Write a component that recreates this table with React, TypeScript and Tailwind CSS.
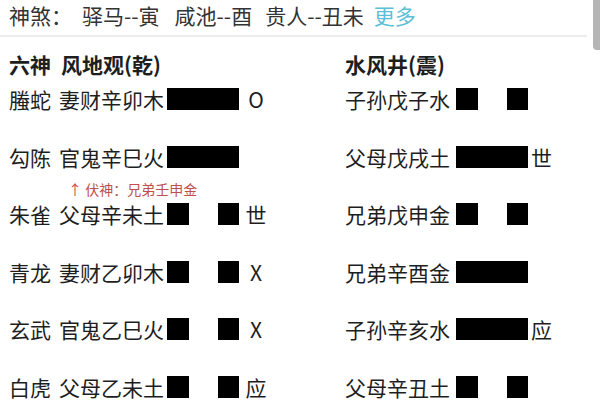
import React from "react";

type Line = { yang: boolean; mark?: string };

const left: { god: string; name: string; line: Line }[] = [
  { god: "螣蛇", name: "妻财辛卯木", line: { yang: true, mark: "O" } },
  { god: "勾陈", name: "官鬼辛巳火", line: { yang: true } },
  { god: "朱雀", name: "父母辛未土", line: { yang: false, mark: "世" } },
  { god: "青龙", name: "妻财乙卯木", line: { yang: false, mark: "X" } },
  { god: "玄武", name: "官鬼乙巳火", line: { yang: false, mark: "X" } },
  { god: "白虎", name: "父母乙未土", line: { yang: false, mark: "应" } },
];

const right: { name: string; line: Line }[] = [
  { name: "子孙戊子水", line: { yang: false } },
  { name: "父母戊戌土", line: { yang: true, mark: "世" } },
  { name: "兄弟戊申金", line: { yang: false } },
  { name: "兄弟辛酉金", line: { yang: true } },
  { name: "子孙辛亥水", line: { yang: true, mark: "应" } },
  { name: "父母辛丑土", line: { yang: false } },
];

function Bar({ yang }: { yang: boolean }) {
  if (yang) return <div className="w-[72px] h-[22px] bg-black" />;
  return (
    <div className="w-[72px] h-[22px] flex justify-between">
      <div className="w-[22px] h-[22px] bg-black" />
      <div className="w-[21px] h-[22px] bg-black" />
    </div>
  );
}

export default function App() {
  const font = { fontFamily: '"Noto Sans CJK SC", "Noto Sans", sans-serif' };
  return (
    <div className="relative w-[600px] h-[400px] bg-white overflow-hidden text-[#1e1e1e]" style={font}>
      <div className="absolute right-0 top-0 w-[7px] h-[50px] bg-[#b5b5b5] rounded-bl-[4px]" />
      <div className="h-[35px] flex items-center pl-[9px] text-[21px] leading-[22px] text-[#333] pb-[5px]">
        <span>神煞：</span>
        <span className="ml-[10px]">驿马--寅</span>
        <span className="ml-[15px]">咸池--酉</span>
        <span className="ml-[13px]">贵人--丑未</span>
        <span className="ml-[10px] text-[#5bbfd8]">更多</span>
      </div>
      <div className="w-[587px] h-[2px] bg-[#ececec]" />
      <div className="pt-[16px] pl-[9px] grid grid-cols-[336px_1fr]">
        <div>
          <div className="h-[22px] leading-[22px] text-[21px] font-bold mb-[13px]">
            六神<span className="ml-[10px]">风地观(乾)</span>
          </div>
          {left.map((r, i) => (
            <div key={i} className="h-[57.5px]">
              <div className="h-[22px] flex items-center text-[21px] leading-[22px]">
                <span>{r.god}</span>
                <span className="ml-[8px]">{r.name}</span>
                <div className="ml-[3px]">
                  <Bar yang={r.line.yang} />
                </div>
                <span className="ml-[6px] w-[22px] text-center">{r.line.mark ?? ""}</span>
              </div>
              {i === 1 && (
                <div className="mt-[13px] ml-[59px] text-[14px] leading-[16px] text-[#c0504d]">
                  ↑ 伏神：兄弟壬申金
                </div>
              )}
            </div>
          ))}
        </div>
        <div>
          <div className="h-[22px] leading-[22px] text-[21px] font-bold mb-[13px]">水风井(震)</div>
          {right.map((r, i) => (
            <div key={i} className="h-[57.5px]">
              <div className="h-[22px] flex items-center text-[21px] leading-[22px]">
                <span>{r.name}</span>
                <div className="ml-[6px]">
                  <Bar yang={r.line.yang} />
                </div>
                <span className="ml-[3px]">{r.line.mark ?? ""}</span>
              </div>
            </div>
          ))}
        </div>
      </div>
    </div>
  );
}
